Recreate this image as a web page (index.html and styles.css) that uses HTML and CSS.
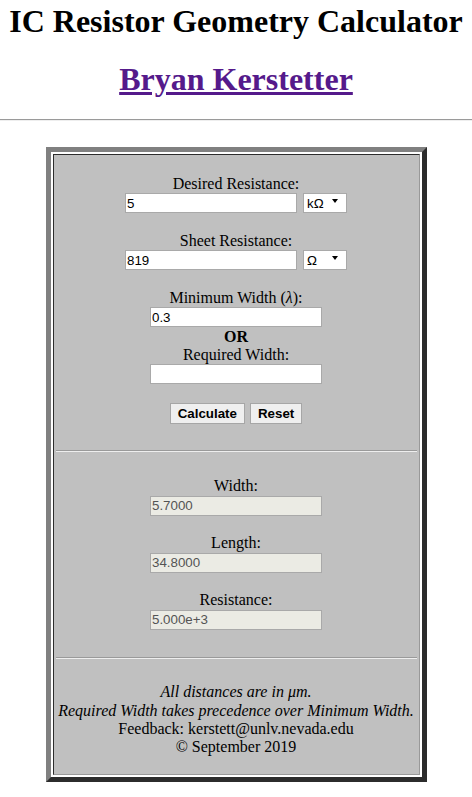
FILE: index.html
```html
<!DOCTYPE html>
<html lang="en">
<head>
<meta charset="utf-8">
<title>IC Resistor Geometry Calculator</title>
<link rel="stylesheet" href="styles.css">
</head>
<body>
<h1 class="title">IC Resistor Geometry Calculator</h1>
<h1 class="author"><a class="author-link" href="#">Bryan Kerstetter</a></h1>
<hr class="page-rule">
<div class="calc">
  <div class="cell">
    <form class="inputs">
      <div class="group">
        <div class="label">Desired Resistance:</div>
        <div class="row">
          <input class="field" type="text" value="5">
          <span class="select-wrap"><select class="select"><option>kΩ</option></select></span>
        </div>
      </div>
      <div class="group">
        <div class="label">Sheet Resistance:</div>
        <div class="row">
          <input class="field" type="text" value="819">
          <span class="select-wrap"><select class="select"><option>Ω</option></select></span>
        </div>
      </div>
      <div class="group">
        <div class="label">Minimum Width (<i>λ</i>):</div>
        <div class="row"><input class="field" type="text" value="0.3"></div>
        <div class="label or">OR</div>
        <div class="label">Required Width:</div>
        <div class="row"><input class="field" type="text" value=""></div>
      </div>
      <div class="buttons">
        <button class="btn" type="button">Calculate</button>
        <button class="btn" type="reset">Reset</button>
      </div>
    </form>
    <hr class="cell-rule rule-one">
    <div class="results">
      <div class="group">
        <div class="label">Width:</div>
        <div class="row"><input class="field out" type="text" value="5.7000" readonly></div>
      </div>
      <div class="group">
        <div class="label">Length:</div>
        <div class="row"><input class="field out" type="text" value="34.8000" readonly></div>
      </div>
      <div class="group last">
        <div class="label">Resistance:</div>
        <div class="row"><input class="field out" type="text" value="5.000e+3" readonly></div>
      </div>
    </div>
    <hr class="cell-rule rule-two">
    <div class="notes">
      <div class="note"><i>All distances are in μm.</i></div>
      <div class="note"><i>Required Width takes precedence over Minimum Width.</i></div>
      <div class="note">Feedback: kerstett@unlv.nevada.edu</div>
      <div class="note">© September 2019</div>
    </div>
  </div>
</div>
</body>
</html>
```
FILE: styles.css
```css
html, body {
  margin: 0;
  padding: 0;
  background: #ffffff;
}

body {
  font-family: "Liberation Serif", "Times New Roman", serif;
  font-size: 16px;
  color: #000000;
}

.title,
.author {
  font-size: 32px;
  font-weight: bold;
  line-height: 36.8px;
  text-align: center;
}

.title {
  margin: 3px 0 21.4px;
}

.author {
  margin: 0 0 21.4px;
}

.author-link {
  color: #551a8b;
  text-decoration: underline;
}

.page-rule {
  margin: 0 0 25.6px;
  height: 0;
  border: 0;
  border-top: 1px solid #9a9a9a;
  border-bottom: 1px solid #eeeeee;
}

.calc {
  width: 367px;
  margin: 0 auto;
  padding: 2px;
  border-style: solid;
  border-width: 5px;
  border-color: #808080 #2c2c2c #2c2c2c #808080;
  background: #ffffff;
}

.cell {
  background: #c0c0c0;
  padding: 1px;
  border-style: solid;
  border-width: 1px;
  border-color: #2c2c2c #999999 #999999 #2c2c2c;
  line-height: 18.4px;
}

.inputs {
  margin: 0;
  padding-top: 19px;
}

.group {
  margin-bottom: 18.4px;
}

.group.last {
  margin-bottom: 0;
}

.label {
  text-align: center;
}

.or {
  font-weight: bold;
}

.row {
  height: 20.2px;
  display: flex;
  justify-content: center;
  align-items: center;
  gap: 6px;
}

.field {
  box-sizing: border-box;
  width: 172px;
  height: 20px;
  margin: 0;
  padding: 0 1px;
  border: 1px solid #a9a9a9;
  background: #ffffff;
  color: #000000;
  font-family: "Liberation Sans", Arial, sans-serif;
  font-size: 13.33px;
  outline: none;
}

.field.out {
  background: #ebebe4;
  color: #545454;
}

.select-wrap {
  position: relative;
  display: block;
  width: 44px;
  height: 20px;
}

.select {
  -webkit-appearance: none;
  appearance: none;
  box-sizing: border-box;
  width: 44px;
  height: 20px;
  margin: 0;
  padding: 0 0 0 3px;
  border: 1px solid #a9a9a9;
  border-radius: 0;
  background: #ffffff;
  color: #000000;
  font-family: "Liberation Sans", Arial, sans-serif;
  font-size: 13.33px;
}

.select-wrap::after {
  content: "";
  position: absolute;
  right: 9px;
  top: 6px;
  width: 0;
  height: 0;
  border-left: 3px solid transparent;
  border-right: 3px solid transparent;
  border-top: 4px solid #000000;
  pointer-events: none;
}

.buttons {
  margin-top: 18.7px;
  height: 21px;
  display: flex;
  justify-content: center;
  gap: 5px;
}

.btn {
  box-sizing: border-box;
  height: 21px;
  margin: 0;
  padding: 0 7px;
  border: 1px solid #a6a6a6;
  border-radius: 0;
  background: #efefef;
  color: #000000;
  font-family: "Liberation Sans", Arial, sans-serif;
  font-size: 13.33px;
  font-weight: bold;
}

.cell-rule {
  height: 0;
  margin: 0 1px;
  border: 0;
  border-top: 1px solid #9a9a9a;
  border-bottom: 1px solid #eeeeee;
}

.rule-one {
  margin-top: 25.7px;
}

.results {
  padding-top: 25.3px;
}

.rule-two {
  margin-top: 27.1px;
}

.notes {
  margin: 24.4px 0 16.6px;
  text-align: center;
}
```
